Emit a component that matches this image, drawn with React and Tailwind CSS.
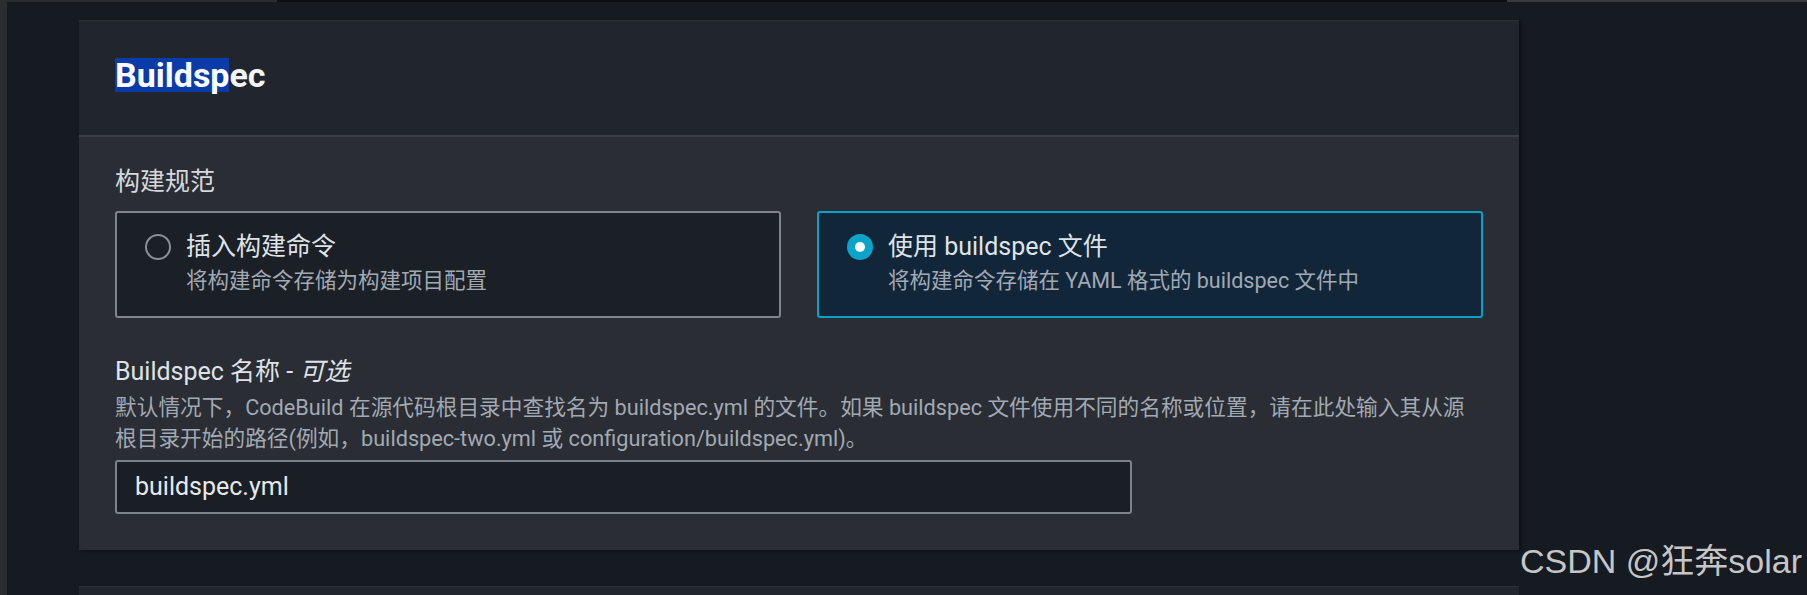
import React from 'react';

const RadioCard = ({ selected, label, description }) => (
    <div
        className={`flex h-[107px] items-start rounded-[3px] border-2 pl-[28px] pt-[18px] ${
            selected ? 'border-[#0aa1c8] bg-[#12263a]' : 'border-[#7f858c] bg-[#1b1f26]'
        }`}
    >
        <div className="flex h-[32px] items-center">
            {selected ? (
                <span className="flex h-[26px] w-[26px] items-center justify-center rounded-full bg-[#0aa3ca]">
                    <span className="h-[10px] w-[10px] rounded-full bg-white" />
                </span>
            ) : (
                <span className="h-[26px] w-[26px] rounded-full border-2 border-[#8a9096]" />
            )}
        </div>
        <div className="ml-[15px]">
            <div className="text-[25px] leading-[32px] text-[#dfe3e8]">{label}</div>
            <div className="mt-[3px] text-[21.5px] leading-[30px] text-[#a1a9b3]">{description}</div>
        </div>
    </div>
);

const App = () => {
    return (
        <div className="relative flex h-[595px] w-full overflow-hidden bg-[#161a21] [font-family:Roboto,'Noto_Sans_CJK_SC',sans-serif]">
            <div className="h-full w-[7px] shrink-0 bg-[#2b2d31]" />

            <div className="flex min-w-0 flex-1 flex-col">
                {/* thin strip at the very top */}
                <div className="flex h-[2px] shrink-0">
                    <div className="w-[270px] bg-[#2a2c30]" />
                    <div className="w-[1230px] bg-[#0c0e12]" />
                    <div className="flex-1 bg-[#3a3b3d]" />
                </div>

                <div className="pl-[72px] pt-[18px]">
                    <section className="w-[1440px] bg-[#2a2d33] shadow-[2px_1px_3px_rgba(0,0,0,0.45)]">
                        {/* Header */}
                        <div className="flex h-[117px] items-center border-t border-b-2 border-t-[#2c3039] border-b-[#3a3e46] bg-[#21252d] px-[36px] pb-[6px]">
                            <h2 className="text-[34px] font-bold leading-[34px] text-[#f4f5f6]">
                                <span className="inline-block bg-[#0b3ba9] leading-[34px] text-white">Buildsp</span>ec
                            </h2>
                        </div>

                        {/* Body */}
                        <div className="px-[36px] pb-[36px] pt-[30px]">
                            <div className="text-[25px] leading-[30px] text-[#d5d9de]">构建规范</div>

                            <div className="mt-[14px] grid grid-cols-2 gap-[36px]">
                                <RadioCard label="插入构建命令" description="将构建命令存储为构建项目配置" />
                                <RadioCard
                                    selected
                                    label="使用 buildspec 文件"
                                    description="将构建命令存储在 YAML 格式的 buildspec 文件中"
                                />
                            </div>

                            <div className="mt-[38px] text-[25px] leading-[32px] text-[#dfe3e8]">
                                Buildspec 名称 - <i className="italic">可选</i>
                            </div>
                            <div className="mt-[4px] text-[21.7px] leading-[31px] text-[#a1a9b3]">
                                <span className="block whitespace-nowrap">
                                    默认情况下，CodeBuild 在源代码根目录中查找名为 buildspec.yml 的文件。如果 buildspec 文件使用不同的名称或位置，请在此处输入其从源
                                </span>
                                <span className="block whitespace-nowrap">
                                    根目录开始的路径(例如，buildspec-two.yml 或 configuration/buildspec.yml)。
                                </span>
                            </div>

                            <div className="mt-[6px] flex h-[54px] w-[1017px] items-center rounded-[3px] border-2 border-[#7d838a] bg-[#1a1e25] px-[18px]">
                                <span className="text-[25px] leading-[30px] text-[#e6e9ec]">buildspec.yml</span>
                            </div>
                        </div>
                    </section>

                    <div className="mt-[36px] h-[60px] w-[1440px] border-t border-[#2c3038] bg-[#22262e]" />
                </div>
            </div>

            {/* watermark */}
            <div className="absolute right-[5px] top-[544px] whitespace-nowrap text-[34px] leading-none text-[#c6c6c6] [font-family:'Liberation_Sans','Noto_Sans_CJK_SC',sans-serif]">
                CSDN @狂奔solar
            </div>
        </div>
    );
};

export default App;
